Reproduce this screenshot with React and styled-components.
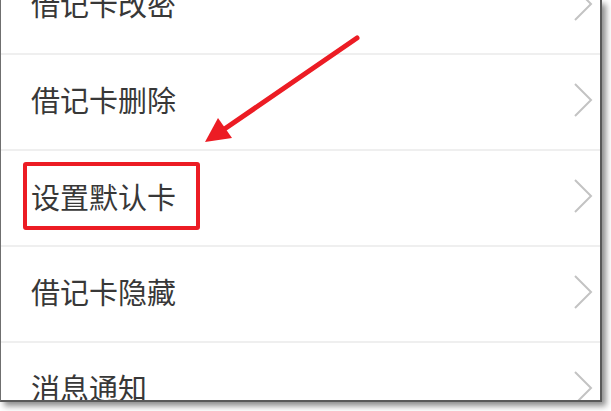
import React from "react";
import styled, { createGlobalStyle } from "styled-components";

const GlobalStyle = createGlobalStyle`
  html, body {
    margin: 0;
    padding: 0;
    background: #ffffff;
  }
  body {
    font-family: "Noto Sans CJK SC", "Noto Sans", sans-serif;
  }
`;

const Page = styled.div`
  width: 611px;
  height: 411px;
  background: #ffffff;
  overflow: hidden;
`;

const Frame = styled.div`
  position: relative;
  width: 599px;
  height: 400px;
  background: #ffffff;
  border-left: 1px solid #6f6f6f;
  border-right: 2px solid #5a5a5a;
  border-bottom: 2px solid #5a5a5a;
  box-shadow: 4px 4px 6px rgba(0, 0, 0, 0.45);
  overflow: hidden;
`;

const List = styled.ul`
  list-style: none;
  margin: -41px 0 0 0;
  padding: 0;
`;

const Row = styled.li`
  height: 96px;
  display: flex;
  align-items: center;
  justify-content: space-between;
  padding: 0 7px 5px 30px;
  box-sizing: border-box;
  border-bottom: 2px solid #efefef;
`;

const Label = styled.span`
  font-size: 29px;
  line-height: 29px;
  color: #383838;
`;

const Highlight = styled.span`
  display: inline-flex;
  align-items: center;
  margin-left: -8px;
  padding: 16px 20px 15px 4px;
  border: 4px solid #ec1c24;
  border-radius: 3px;
`;

const Chevron = styled.svg`
  width: 20px;
  height: 34px;
  flex-shrink: 0;
`;

const Arrow = styled.svg`
  position: absolute;
  left: 0;
  top: 0;
  pointer-events: none;
`;

const items = [
  { label: "借记卡改密" },
  { label: "借记卡删除" },
  { label: "设置默认卡", marked: true },
  { label: "借记卡隐藏" },
  { label: "消息通知" },
];

function ChevronIcon() {
  return (
    <Chevron viewBox="0 0 20 34">
      <polyline
        points="2,1 18,17 2,33"
        fill="none"
        stroke="#c3c3c3"
        strokeWidth="2"
      />
    </Chevron>
  );
}

export default function App() {
  return (
    <Page>
      <GlobalStyle />
      <Frame>
        <List>
          {items.map((item) => (
            <Row key={item.label}>
              {item.marked ? (
                <Highlight>
                  <Label>{item.label}</Label>
                </Highlight>
              ) : (
                <Label>{item.label}</Label>
              )}
              <ChevronIcon />
            </Row>
          ))}
        </List>
        <Arrow width="600" height="400" viewBox="0 0 600 400">
          <line
            x1="356"
            y1="38"
            x2="222"
            y2="130"
            stroke="#ec1c24"
            strokeWidth="5"
            strokeLinecap="round"
          />
          <polygon points="204,142 217,118 231,138" fill="#ec1c24" />
        </Arrow>
      </Frame>
    </Page>
  );
}
